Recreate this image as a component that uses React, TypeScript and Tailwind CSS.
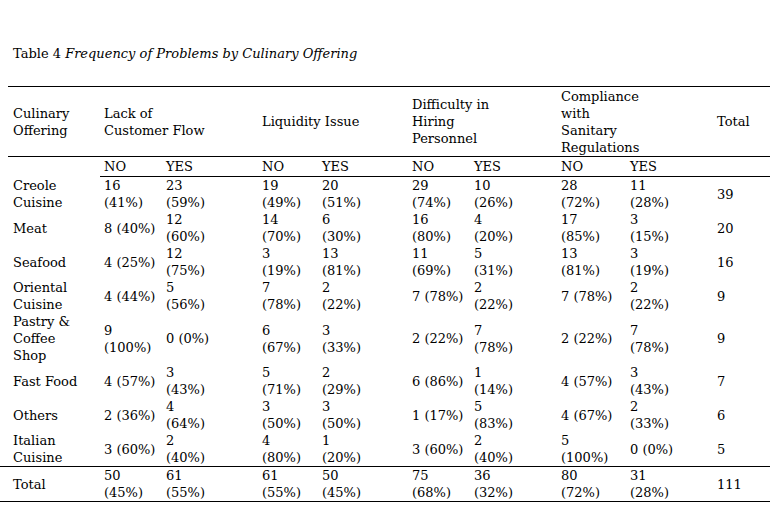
const cols =
  'grid grid-cols-[92px_62px_96px_60px_90px_62px_87px_69px_87px_57px]';

// left padding per column so text lands where it does in the source
const pad = [
  'pl-[5px]',
  'pl-[4px]',
  'pl-[4px]',
  'pl-[4px]',
  'pl-[4px]',
  'pl-[4px]',
  'pl-[4px]',
  'pl-[4px]',
  'pl-[4px]',
  'pl-[4px]',
];

interface Row {
  label: string;
  cells: string[];
}

const rows: Row[] = [
  {
    label: 'Creole\nCuisine',
    cells: ['16\n(41%)', '23\n(59%)', '19\n(49%)', '20\n(51%)', '29\n(74%)', '10\n(26%)', '28\n(72%)', '11\n(28%)', '39'],
  },
  {
    label: 'Meat',
    cells: ['8 (40%)', '12\n(60%)', '14\n(70%)', '6\n(30%)', '16\n(80%)', '4\n(20%)', '17\n(85%)', '3\n(15%)', '20'],
  },
  {
    label: 'Seafood',
    cells: ['4 (25%)', '12\n(75%)', '3\n(19%)', '13\n(81%)', '11\n(69%)', '5\n(31%)', '13\n(81%)', '3\n(19%)', '16'],
  },
  {
    label: 'Oriental\nCuisine',
    cells: ['4 (44%)', '5\n(56%)', '7\n(78%)', '2\n(22%)', '7 (78%)', '2\n(22%)', '7 (78%)', '2\n(22%)', '9'],
  },
  {
    label: 'Pastry &\nCoffee\nShop',
    cells: ['9\n(100%)', '0 (0%)', '6\n(67%)', '3\n(33%)', '2 (22%)', '7\n(78%)', '2 (22%)', '7\n(78%)', '9'],
  },
  {
    label: 'Fast Food',
    cells: ['4 (57%)', '3\n(43%)', '5\n(71%)', '2\n(29%)', '6 (86%)', '1\n(14%)', '4 (57%)', '3\n(43%)', '7'],
  },
  {
    label: 'Others',
    cells: ['2 (36%)', '4\n(64%)', '3\n(50%)', '3\n(50%)', '1 (17%)', '5\n(83%)', '4 (67%)', '2\n(33%)', '6'],
  },
  {
    label: 'Italian\nCuisine',
    cells: ['3 (60%)', '2\n(40%)', '4\n(80%)', '1\n(20%)', '3 (60%)', '2\n(40%)', '5\n(100%)', '0 (0%)', '5'],
  },
];

const totals = ['50\n(45%)', '61\n(55%)', '61\n(55%)', '50\n(45%)', '75\n(68%)', '36\n(32%)', '80\n(72%)', '31\n(28%)', '111'];

function Cell({ text, i, span }: { text: string; i: number; span?: string }) {
  return (
    <div className={`flex items-center whitespace-pre-line ${pad[i]} ${span ?? ''}`}>
      {text}
    </div>
  );
}

export default function App() {
  return (
    <div className="min-h-screen w-[779px] bg-white text-black text-[13px] leading-[17px] font-['DejaVu_Serif',serif]">
      <div className="pt-[45px] pl-[13px]">
        Table 4 <i>Frequency of Problems by Culinary Offering</i>
      </div>

      <div className="ml-2 mt-[24px] w-[762px]">
        {/* main header */}
        <div className={`${cols} h-[71px] border-y border-black`}>
          <Cell text={'Culinary\nOffering'} i={0} />
          <Cell text={'Lack of\nCustomer Flow'} i={1} span="col-span-2" />
          <Cell text="Liquidity Issue" i={3} span="col-span-2" />
          <Cell text={'Difficulty in\nHiring\nPersonnel'} i={5} span="col-span-2" />
          <Cell text={'Compliance\nwith\nSanitary\nRegulations'} i={7} span="col-span-2" />
          <Cell text="Total" i={9} />
        </div>

        {/* NO / YES sub header */}
        <div className={`${cols} h-[20px]`}>
          <div />
          {['NO', 'YES', 'NO', 'YES', 'NO', 'YES', 'NO', 'YES', ''].map((t, k) => (
            <div key={k} className={`flex items-center border-b border-black ${pad[k + 1]}`}>
              {t}
            </div>
          ))}
        </div>

        {rows.map((r) => (
          <div key={r.label} className={cols}>
            <Cell text={r.label} i={0} />
            {r.cells.map((c, k) => (
              <Cell key={k} text={c} i={k + 1} />
            ))}
          </div>
        ))}

        {/* totals, rules run out to the page edge */}
        <div className="-ml-2 pl-2 w-[770px] border-y border-black">
          <div className={`${cols} h-[34px]`}>
            <Cell text="Total" i={0} />
            {totals.map((c, k) => (
              <Cell key={k} text={c} i={k + 1} />
            ))}
          </div>
        </div>
      </div>
    </div>
  );
}
